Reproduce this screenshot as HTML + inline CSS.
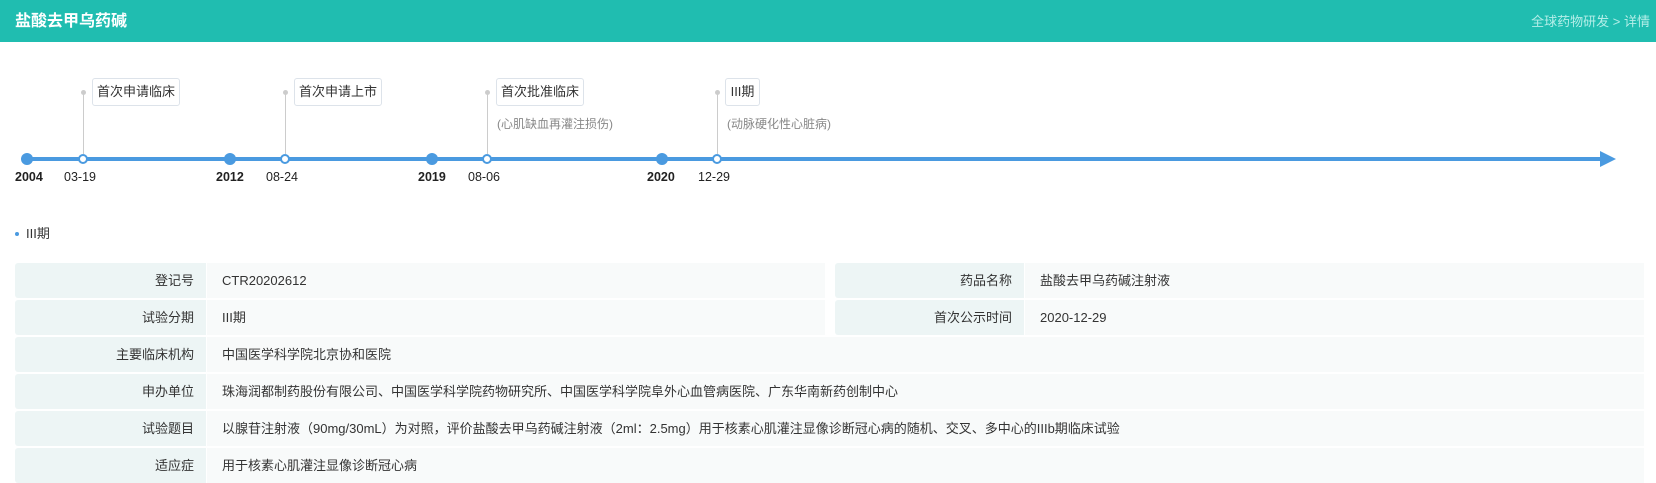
<!DOCTYPE html>
<html><head><meta charset="utf-8"><style>
*{margin:0;padding:0;box-sizing:border-box}
body{width:1656px;height:480px;background:#fff;font-family:"Liberation Sans","Noto Sans CJK SC",sans-serif;color:#333;position:relative;overflow:hidden}
.hd{position:absolute;left:0;top:0;width:1656px;height:42px;background:#20bdb0}
.hd .t{position:absolute;left:15px;top:11px;font-size:16px;font-weight:bold;color:#fff;line-height:22px}
.hd .b{position:absolute;right:6px;top:13px;font-size:13px;color:#b4eee8;line-height:18px}
.a{position:absolute}
.dot{position:absolute;width:12px;height:12px;border-radius:50%;background:#4a9ae0;top:153px}
.odot{position:absolute;width:10px;height:10px;border-radius:50%;background:#fff;border:2px solid #4a9ae0;top:154px}
.stem{position:absolute;width:1px;background:#ccc;top:92px;height:62px}
.sd{position:absolute;width:5px;height:5px;border-radius:50%;background:#ccc;top:90px}
.box{position:absolute;top:78px;height:28px;border:1px solid #dde3ea;border-radius:3px;font-size:13px;line-height:26px;text-align:center;color:#333;background:#fff}
.sub{position:absolute;top:116px;font-size:12px;color:#888;line-height:16px;white-space:nowrap}
.lb{position:absolute;top:169px;font-size:12.5px;line-height:16px;color:#222;white-space:nowrap}
.yr{font-weight:bold}
.r{position:absolute;height:35px;font-size:13px;line-height:35px;white-space:nowrap}
.l{background:#edf5f5;text-align:right;padding-right:12px;color:#333;border-radius:3px 0 0 3px}
.v{background:#f8fafa;padding-left:15px;color:#333}
</style></head><body>
<div class="hd"><div class="t">盐酸去甲乌药碱</div><div class="b">全球药物研发 &gt; 详情</div></div>

<div class="a" style="left:27px;top:157px;width:1580px;height:4px;background:#4a9ae0"></div>
<svg class="a" style="left:1600px;top:151px" width="18" height="16"><polygon points="0,0 16,8 0,16" fill="#4a9ae0"/></svg>

<div class="stem" style="left:83px"></div><div class="sd" style="left:81px"></div>
<div class="stem" style="left:285px"></div><div class="sd" style="left:283px"></div>
<div class="stem" style="left:487px"></div><div class="sd" style="left:485px"></div>
<div class="stem" style="left:717px"></div><div class="sd" style="left:715px"></div>

<div class="dot" style="left:21px"></div>
<div class="odot" style="left:78px"></div>
<div class="dot" style="left:224px"></div>
<div class="odot" style="left:280px"></div>
<div class="dot" style="left:426px"></div>
<div class="odot" style="left:482px"></div>
<div class="dot" style="left:656px"></div>
<div class="odot" style="left:712px"></div>

<div class="box" style="left:92px;width:88px">首次申请临床</div>
<div class="box" style="left:294px;width:88px">首次申请上市</div>
<div class="box" style="left:496px;width:88px">首次批准临床</div>
<div class="box" style="left:725px;width:35px">III期</div>
<div class="sub" style="left:497px">(心肌缺血再灌注损伤)</div>
<div class="sub" style="left:727px">(动脉硬化性心脏病)</div>

<div class="lb yr" style="left:15px">2004</div>
<div class="lb" style="left:64px">03-19</div>
<div class="lb yr" style="left:216px">2012</div>
<div class="lb" style="left:266px">08-24</div>
<div class="lb yr" style="left:418px">2019</div>
<div class="lb" style="left:468px">08-06</div>
<div class="lb yr" style="left:647px">2020</div>
<div class="lb" style="left:698px">12-29</div>

<div class="a" style="left:15px;top:232px;width:4px;height:4px;border-radius:50%;background:#4a9ae0"></div>
<div class="a" style="left:26px;top:225px;font-size:13px;line-height:18px">III期</div>

<div class="r l" style="left:15px;top:263px;width:191px">登记号</div>
<div class="r v" style="left:207px;top:263px;width:618px">CTR20202612</div>
<div class="r l" style="left:835px;top:263px;width:189px">药品名称</div>
<div class="r v" style="left:1025px;top:263px;width:619px">盐酸去甲乌药碱注射液</div>

<div class="r l" style="left:15px;top:300px;width:191px">试验分期</div>
<div class="r v" style="left:207px;top:300px;width:618px">III期</div>
<div class="r l" style="left:835px;top:300px;width:189px">首次公示时间</div>
<div class="r v" style="left:1025px;top:300px;width:619px">2020-12-29</div>

<div class="r l" style="left:15px;top:337px;width:191px">主要临床机构</div>
<div class="r v" style="left:207px;top:337px;width:1437px">中国医学科学院北京协和医院</div>

<div class="r l" style="left:15px;top:374px;width:191px">申办单位</div>
<div class="r v" style="left:207px;top:374px;width:1437px">珠海润都制药股份有限公司、中国医学科学院药物研究所、中国医学科学院阜外心血管病医院、广东华南新药创制中心</div>

<div class="r l" style="left:15px;top:411px;width:191px">试验题目</div>
<div class="r v" style="left:207px;top:411px;width:1437px">以腺苷注射液（90mg/30mL）为对照，评价盐酸去甲乌药碱注射液（2ml：2.5mg）用于核素心肌灌注显像诊断冠心病的随机、交叉、多中心的IIIb期临床试验</div>

<div class="r l" style="left:15px;top:448px;width:191px">适应症</div>
<div class="r v" style="left:207px;top:448px;width:1437px">用于核素心肌灌注显像诊断冠心病</div>
</body></html>
